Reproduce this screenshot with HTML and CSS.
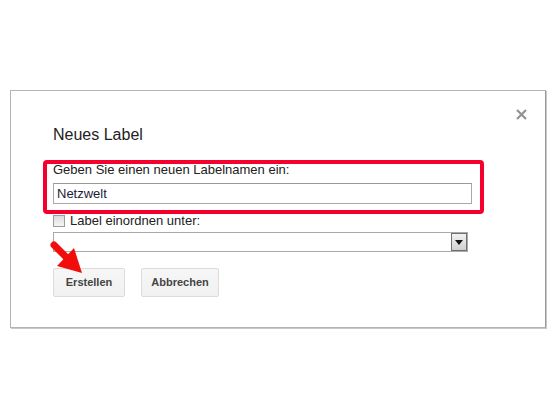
FILE: index.html
```html
<!DOCTYPE html>
<html>
<head>
<meta charset="utf-8">
<link rel="stylesheet" href="styles.css">
</head>
<body>
<div class="dialog">
  <svg class="close" width="11" height="11" viewBox="0 0 11 11"><path d="M1 1 L10 10 M10 1 L1 10" stroke="#939393" stroke-width="2.2" fill="none"/></svg>
  <div class="title">Neues Label</div>
  <div class="label">Geben Sie einen neuen Labelnamen ein:</div>
  <div class="input">Netzwelt</div>
  <div class="check-row">
    <span class="checkbox"></span>
    <span class="check-label">Label einordnen unter:</span>
  </div>
  <div class="select">
    <span class="select-btn"><svg width="8" height="5" viewBox="0 0 8 5"><path d="M0 0 H8 L4 5 Z" fill="#111"/></svg></span>
  </div>
  <div class="buttons">
    <div class="btn btn-create">Erstellen</div>
    <div class="btn btn-cancel">Abbrechen</div>
  </div>
  <div class="highlight"></div>
  <svg class="arrow" width="38" height="38" viewBox="0 0 38 38">
    <path d="M5 4 L21 20" stroke="#f20d0d" stroke-width="7" stroke-linecap="round" fill="none"/>
    <polygon points="25,7 33,32 8,25" fill="#f20d0d"/>
  </svg>
</div>
</body>
</html>
```

FILE: styles.css
```css
html, body {
  margin: 0;
  padding: 0;
  background: #fff;
}
body {
  font-family: Arial, "Liberation Sans", sans-serif;
  color: #222;
  width: 557px;
  height: 418px;
  overflow: hidden;
}
.dialog {
  position: relative;
  box-sizing: border-box;
  margin: 90px 0 0 10px;
  width: 536px;
  height: 238px;
  border: 1px solid #b4b4b4;
  border-right-color: #9a9a9a;
  box-shadow: 1px 1px 0 #c8c8c8;
  padding: 35px 0 0 42px;
  display: flex;
  flex-direction: column;
  align-items: flex-start;
}
.close {
  position: absolute;
  right: 18px;
  top: 18px;
}
.title {
  font-size: 16px;
  line-height: 18px;
  margin-bottom: 18px;
  color: #222;
}
.label {
  font-size: 13px;
  line-height: 15px;
  margin-bottom: 6px;
  color: #222;
}
.input {
  box-sizing: border-box;
  width: 419px;
  height: 21px;
  border: 1px solid #a9a9a9;
  border-top-color: #999;
  padding-left: 3px;
  font-size: 13px;
  line-height: 19px;
  color: #1c1c3a;
}
.check-row {
  margin-top: 10px;
  display: flex;
  align-items: center;
  height: 13px;
}
.checkbox {
  box-sizing: border-box;
  width: 12px;
  height: 12px;
  border: 1px solid #9c9c9c;
  background: linear-gradient(#dcdcdc, #f4f4f4);
}
.check-label {
  margin-left: 5px;
  font-size: 13px;
  line-height: 13px;
  color: #222;
}
.select {
  box-sizing: border-box;
  margin-top: 5px;
  width: 415px;
  height: 20px;
  border: 1px solid #a9a9a9;
  display: flex;
  justify-content: flex-end;
}
.select-btn {
  box-sizing: border-box;
  width: 16px;
  height: 18px;
  border: 1px solid #707070;
  background: linear-gradient(#f2f2f2, #cfcfcf);
  display: flex;
  align-items: center;
  justify-content: center;
}
.buttons {
  margin-top: 16px;
  display: flex;
  gap: 16px;
}
.btn {
  box-sizing: border-box;
  height: 29px;
  border: 1px solid #dcdcdc;
  border-radius: 2px;
  background: linear-gradient(#f6f6f6, #f1f1f1);
  font-size: 11px;
  font-weight: bold;
  color: #444;
  line-height: 27px;
  text-align: center;
}
.btn-create {
  width: 72px;
}
.btn-cancel {
  width: 78px;
}
.highlight {
  position: absolute;
  left: 32px;
  top: 69px;
  box-sizing: border-box;
  width: 441px;
  height: 54px;
  border: 4px solid #f5002d;
  border-radius: 4px;
}
.arrow {
  position: absolute;
  left: 38px;
  top: 150px;
}
```
